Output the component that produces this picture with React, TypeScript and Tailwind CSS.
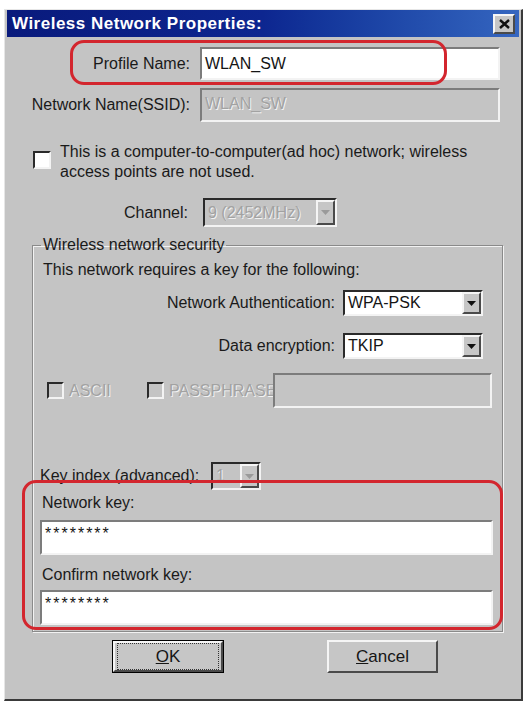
import React from 'react';

const sunken = 'border-2 border-t-[#7c7c7c] border-l-[#7c7c7c] border-b-[#f3f3f3] border-r-[#f3f3f3]';
const sunkenDark = 'border-2 border-t-[#2a2a2a] border-l-[#2a2a2a] border-b-[#f3f3f3] border-r-[#f3f3f3]';
const raised = 'border-2 border-t-[#f5f5f5] border-l-[#f5f5f5] border-b-[#4a4a4a] border-r-[#4a4a4a]';
const etched = 'text-[#a2a2a2] [text-shadow:1px_1px_0_#f2f2f2]';

const DropButton: React.FC<{ disabled?: boolean }> = ({ disabled }) => (
    <div className={`w-[19px] h-full flex items-center justify-center bg-[#c6c6c6] ${raised}`}>
        <svg width="9" height="5" viewBox="0 0 9 5">
            <path d="M0 0h9L4.5 5z" fill={disabled ? '#9a9a9a' : '#111'} />
        </svg>
    </div>
);

const Combo: React.FC<{ value: string; className: string; disabled?: boolean }> = ({ value, className, disabled }) => (
    <div className={`flex items-center ${sunkenDark} ${disabled ? 'bg-[#c4c4c4]' : 'bg-white'} ${className}`}>
        <span className={`flex-1 pl-[3px] leading-none whitespace-nowrap overflow-hidden ${disabled ? etched : 'text-[#151515]'}`}>
            {value}
        </span>
        <DropButton disabled={disabled} />
    </div>
);

const Check: React.FC<{ disabled?: boolean; size?: string }> = ({ disabled, size = 'w-[18px] h-[18px]' }) => (
    <div className={`shrink-0 ${size} ${sunkenDark} ${disabled ? 'bg-[#c4c4c4]' : 'bg-white'}`} />
);

const Button: React.FC<{ label: React.ReactNode; isDefault?: boolean; className: string }> = ({ label, isDefault, className }) => (
    <div className={`${className} h-[33px] ${isDefault ? 'border border-black' : ''}`}>
        <div className={`w-full h-full flex items-center justify-center bg-[#c6c6c6] ${raised}`}>
            <div className={`w-full h-full flex items-center justify-center ${isDefault ? 'border border-dotted border-[#333] m-[2px]' : ''}`}>
                <span className="text-[#151515] text-[17px] leading-none">{label}</span>
            </div>
        </div>
    </div>
);

export default function App() {
    return (
        <div
            className="relative w-[526px] h-[703px] bg-white overflow-hidden text-[16px]"
            style={{ fontFamily: '"Liberation Sans", Arial, sans-serif' }}
        >
            <div className="ml-[4px] mt-[9px] w-[519px] h-[692px] bg-[#c4c4c4] border-t border-l border-t-[#e6e6e6] border-l-[#e6e6e6] border-r-2 border-b-2 border-r-[#3a3a3a] border-b-[#3a3a3a] px-[2px] flex flex-col">
                {/* title bar */}
                <div className="h-[27px] flex items-center bg-linear-to-r from-[#091a7c] via-[#0d2690] to-[#3566c0]">
                    <span className="ml-[5px] text-white font-bold text-[17px] tracking-[0.5px]">Wireless Network Properties:</span>
                    <div className={`ml-auto mr-[4px] w-[22px] h-[20px] flex items-center justify-center bg-[#c6c6c6] ${raised}`}>
                        <svg width="11" height="10" viewBox="0 0 11 10">
                            <path d="M1 1l9 8M10 1l-9 8" stroke="#111" strokeWidth="2.4" />
                        </svg>
                    </div>
                </div>

                {/* profile */}
                <div className="mt-[10px] flex items-center">
                    <span className="w-[183px] text-right text-[#1a1a1a]">Profile Name:</span>
                    <div className={`ml-[10px] w-[300px] h-[33px] bg-white flex items-center ${sunken}`}>
                        <span className="pl-[3px] text-[#151515]">WLAN_SW</span>
                    </div>
                </div>

                {/* ssid */}
                <div className="mt-[8px] flex items-center">
                    <span className="w-[183px] text-right text-[#1a1a1a]">Network Name(SSID):</span>
                    <div className={`ml-[10px] w-[300px] h-[34px] bg-[#c4c4c4] flex items-start ${sunken}`}>
                        <span className={`pl-[3px] pt-[2px] ${etched}`}>WLAN_SW</span>
                    </div>
                </div>

                {/* ad hoc */}
                <div className="mt-[20px] flex items-start pl-[26px]">
                    <div className="mt-[9px]">
                        <Check />
                    </div>
                    <span className="ml-[9px] leading-[20px] whitespace-nowrap text-[#1a1a1a]">
                        This is a computer-to-computer(ad hoc) network; wireless
                        <br />
                        access points are not used.
                    </span>
                </div>

                {/* channel */}
                <div className="mt-[16px] flex items-center">
                    <span className="w-[181px] text-right text-[#1a1a1a]">Channel:</span>
                    <Combo value="9  (2452MHz)" disabled className="ml-[15px] w-[134px] h-[29px]" />
                </div>

                {/* security group */}
                <fieldset className="mt-[8px] ml-[25px] w-[471px] border border-[#8a8a8a] shadow-[inset_1px_1px_0_#f2f2f2,1px_1px_0_#f2f2f2] pb-[6px]">
                    <legend className="ml-[8px] px-[2px] leading-[20px] text-[#1a1a1a]">Wireless network security</legend>

                    <div className="mt-[5px] pl-[10px] leading-[20px] text-[#1a1a1a]">
                        This network requires a key for the following:
                    </div>

                    <div className="mt-[10px] flex items-center justify-end pr-[19px]">
                        <span className="mr-[8px] text-[#1a1a1a]">Network Authentication:</span>
                        <Combo value="WPA-PSK" className="w-[140px] h-[26px]" />
                    </div>

                    <div className="mt-[17px] flex items-center justify-end pr-[19px]">
                        <span className="mr-[8px] text-[#1a1a1a]">Data encryption:</span>
                        <Combo value="TKIP" className="w-[140px] h-[26px]" />
                    </div>

                    <div className="mt-[14px] flex items-center pl-[14px]">
                        <div className="w-[100px] flex items-center">
                            <Check disabled size="w-[17px] h-[17px]" />
                            <span className={`ml-[5px] ${etched}`}>ASCII</span>
                        </div>
                        <div className="w-[126px] flex items-center">
                            <Check disabled size="w-[17px] h-[17px]" />
                            <span className={`ml-[5px] ${etched}`}>PASSPHRASE</span>
                        </div>
                        <div className={`w-[219px] h-[35px] bg-[#c4c4c4] ${sunken}`} />
                    </div>

                    <div className="mt-[54px] flex items-center pl-[7px]">
                        <span className="w-[171px] text-[#1a1a1a]">Key index (advanced):</span>
                        <Combo value="1" disabled className="w-[50px] h-[28px]" />
                    </div>

                    <div className="mt-[3px] pl-[9px] leading-[20px] text-[#1a1a1a]">Network key:</div>
                    <div className={`mt-[7px] ml-[7px] w-[453px] h-[35px] bg-white ${sunken}`}>
                        <span className="pl-[3px] text-[16px] tracking-[2px] text-[#151515] leading-[20px]">********</span>
                    </div>

                    <div className="mt-[10px] pl-[9px] leading-[20px] text-[#1a1a1a]">Confirm network key:</div>
                    <div className={`mt-[5px] ml-[7px] w-[453px] h-[35px] bg-white ${sunken}`}>
                        <span className="pl-[3px] text-[16px] tracking-[2px] text-[#151515] leading-[20px]">********</span>
                    </div>
                </fieldset>

                {/* buttons */}
                <div className="mt-[8px] flex items-center pl-[105px] gap-[103px]">
                    <Button isDefault className="w-[112px]" label={<><span className="underline">O</span>K</>} />
                    <Button className="w-[111px]" label={<><span className="underline">C</span>ancel</>} />
                </div>
            </div>

            {/* red annotation marks */}
            <div className="absolute left-[70px] top-[40px] w-[377px] h-[45px] border-[3px] border-[#d3262e] rounded-[14px] pointer-events-none" />
            <div className="absolute left-[22px] top-[480px] w-[481px] h-[150px] border-[3px] border-[#d3262e] rounded-[14px] pointer-events-none" />
        </div>
    );
}
